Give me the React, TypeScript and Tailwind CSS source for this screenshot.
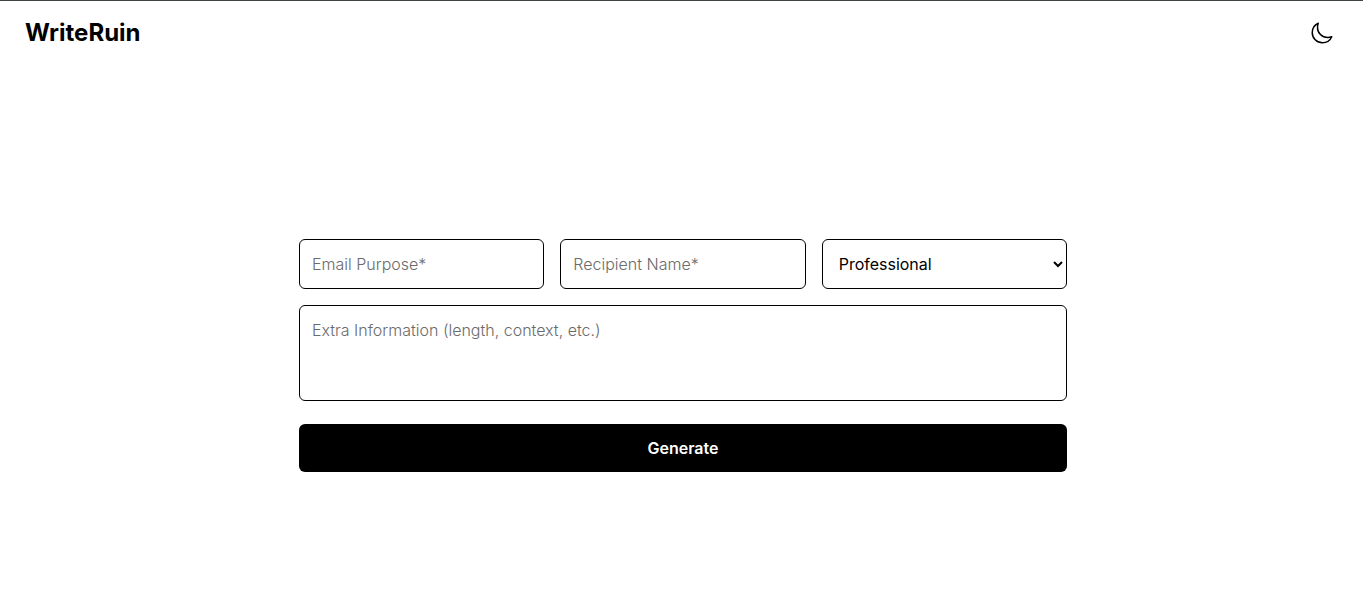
import { IoMoonOutline } from "react-icons/io5";

const field =
  "w-full rounded-md border border-black bg-white text-base text-black placeholder:font-light placeholder:text-[#6b6b6b]";

export default function App() {
  return (
    <div className="flex min-h-screen flex-col border-t border-[#404648] bg-white font-['Inter',sans-serif] text-black">
      <header className="flex h-16 items-center justify-between px-[25px]">
        <h1 className="text-2xl font-bold">WriteRuin</h1>
        <button type="button" aria-label="Toggle dark mode" className="p-1">
          <IoMoonOutline size={24} />
        </button>
      </header>
      <main className="flex grow flex-col items-center justify-center pt-12 pl-[3px]">
        <form className="flex w-full max-w-3xl flex-col">
          <div className="grid grid-cols-3 gap-4">
            <input aria-label="Email purpose" placeholder="Email Purpose*" className={`${field} h-[50px] px-3`} />
            <input aria-label="Recipient name" placeholder="Recipient Name*" className={`${field} h-[50px] px-3`} />
            <select aria-label="Tone" className={`${field} h-[50px] pl-3`}>
              <option>Professional</option>
            </select>
          </div>
          <textarea
            aria-label="Extra information"
            placeholder="Extra Information (length, context, etc.)"
            className={`${field} mt-4 h-24 resize-none p-3`}
          />
          <button type="button" className="mt-[23px] h-12 rounded-md bg-black font-semibold text-white">
            Generate
          </button>
        </form>
      </main>
    </div>
  );
}
